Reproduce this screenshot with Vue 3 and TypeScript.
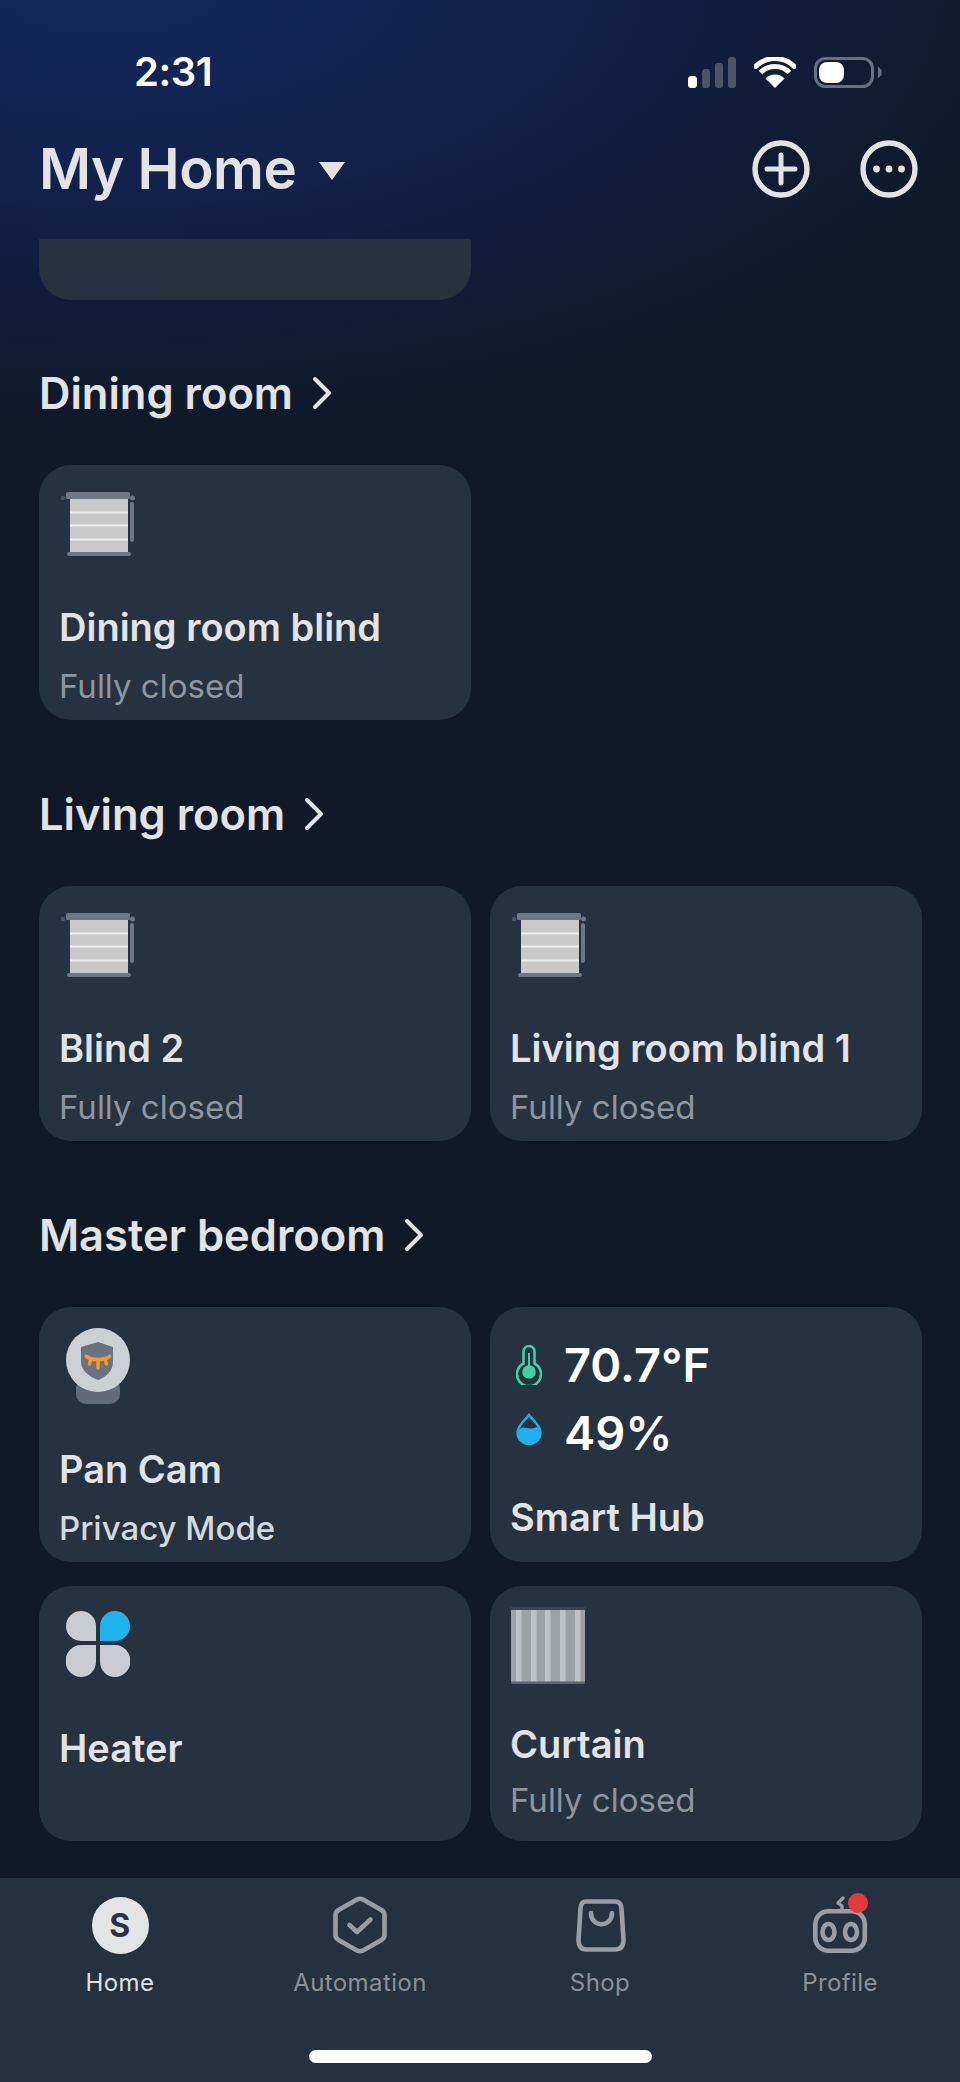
<script setup lang="ts">
interface Device { icon: string; name: string; sub?: string; lift?: boolean; bright?: boolean }
interface Room { title: string; devices: Device[] }

const rooms: Room[] = [
  { title: 'Dining room', devices: [{ icon: 'blind', name: 'Dining room blind', sub: 'Fully closed' }] },
  { title: 'Living room', devices: [
    { icon: 'blind', name: 'Blind 2', sub: 'Fully closed' },
    { icon: 'blind', name: 'Living room blind 1', sub: 'Fully closed' },
  ] },
  { title: 'Master bedroom', devices: [
    { icon: 'cam', name: 'Pan Cam', sub: 'Privacy Mode', bright: true },
    { icon: 'hub', name: 'Smart Hub' },
    { icon: 'heater', name: 'Heater' },
    { icon: 'curtain', name: 'Curtain', sub: 'Fully closed', lift: true },
  ] },
]
const curtainStripes = [5, 20, 34, 49, 64]
</script>

<template>
  <div class="screen">
    <div class="status">
      <span class="time">2:31</span>
      <div class="status-icons">
        <svg class="signal" width="48" height="31" viewBox="0 0 48 31">
          <rect x="0" y="19" width="9" height="12" rx="3.5" fill="#fff" />
          <rect x="14" y="12" width="8" height="19" rx="3" fill="#4c5568" />
          <rect x="27" y="6" width="8" height="25" rx="3" fill="#4c5568" />
          <rect x="40" y="0" width="8" height="31" rx="3" fill="#4c5568" />
        </svg>
        <svg class="wifi" width="42" height="31" viewBox="0 0 42 31">
          <path d="M21 31 L11.5 21.5 A13.5 13.5 0 0 1 30.5 21.5 Z" fill="#fff" />
          <path d="M6.5 15.5 A20.5 20.5 0 0 1 35.5 15.5" fill="none" stroke="#fff" stroke-width="5" />
          <path d="M1.8 9.4 A27.5 27.5 0 0 1 40.2 9.4" fill="none" stroke="#fff" stroke-width="5" stroke-linecap="round" />
        </svg>
        <svg class="battery" width="68" height="31" viewBox="0 0 68 31">
          <rect x="1.5" y="1.5" width="57" height="28" rx="10" fill="none" stroke="#687080" stroke-width="3" />
          <rect x="5" y="5" width="25" height="21" rx="8" fill="#fff" />
          <path d="M64 9.5 L67.5 13 V18 L64 21.5 Z" fill="#687080" />
        </svg>
      </div>
    </div>

    <header class="header">
      <h1 class="home-title">My Home</h1>
      <span class="caret"></span>
      <div class="actions">
        <svg width="58" height="58" viewBox="0 0 58 58" fill="none" stroke="#e2e3e5" stroke-width="5.4" stroke-linecap="round">
          <circle cx="29" cy="29" r="26" />
          <path d="M29 15 V43 M15 29 H43" stroke-width="5" />
        </svg>
        <svg width="58" height="58" viewBox="0 0 58 58" fill="none">
          <circle cx="29" cy="29" r="26" stroke="#e2e3e5" stroke-width="5.4" />
          <circle cx="16.5" cy="29" r="3.4" fill="#e2e3e5" />
          <circle cx="29" cy="29" r="3.4" fill="#e2e3e5" />
          <circle cx="41.5" cy="29" r="3.4" fill="#e2e3e5" />
        </svg>
      </div>
    </header>

    <main class="content">
      <div class="clipped"></div>
      <section v-for="room in rooms" :key="room.title" class="room">
        <div class="room-head">
          <h2 class="room-title">{{ room.title }}</h2>
          <svg width="22" height="34" viewBox="0 0 22 34" fill="none" stroke="#e2e3e5" stroke-width="4" stroke-linecap="round" stroke-linejoin="round">
            <path d="M4 3 L18 17 L4 31" />
          </svg>
        </div>
        <div class="grid">
          <article v-for="d in room.devices" :key="d.name" class="card" :class="{ lift: d.lift, 'hub-card': d.icon === 'hub' }">
            <div class="icon-slot" :class="'slot-' + d.icon">
              <svg v-if="d.icon === 'blind'" width="75" height="64" viewBox="0 0 75 64">
                <rect x="10" y="6" width="58" height="54" fill="#c9c9c9" />
                <rect x="10" y="19.5" width="58" height="2" fill="#eeeeee" />
                <rect x="10" y="32.5" width="58" height="2" fill="#eeeeee" />
                <rect x="10" y="46.5" width="58" height="2" fill="#eeeeee" />
                <rect x="6" y="0" width="64" height="7" rx="1.5" fill="#6f7785" />
                <rect x="7" y="60" width="64" height="4" rx="2" fill="#6f7785" />
                <rect x="70" y="10" width="4" height="40" rx="2" fill="#6f7785" />
                <circle cx="3" cy="6" r="2.3" fill="#4a5362" />
                <circle cx="72.5" cy="6" r="2.5" fill="#6f7785" />
              </svg>
              <svg v-else-if="d.icon === 'cam'" width="64" height="76" viewBox="0 0 64 76">
                <rect x="10" y="50" width="44" height="26" rx="10" fill="#636b78" />
                <circle cx="32" cy="32" r="32" fill="#ccd0d5" />
                <path d="M32 14 L47 19 V34 C47 43 40 49 32 52 C24 49 15 43 15 34 V19 Z" fill="#6a7280" />
                <path d="M20.5 28.5 C26 32.5 38 32.5 43.5 28.5" fill="none" stroke="#f59a2c" stroke-width="4" stroke-linecap="round" />
                <path d="M25 31 L23.5 36 M32 32 V40 M39 31 L40.5 36" fill="none" stroke="#f59a2c" stroke-width="3.4" stroke-linecap="round" />
              </svg>
              <div v-else-if="d.icon === 'hub'" class="readings">
                <div class="reading">
                  <svg width="26" height="40" viewBox="0 0 26 40" fill="none">
                    <path d="M7.5 18.5 V6.5 A5.5 5.5 0 0 1 18.5 6.5 V18.5 A12 12 0 1 1 7.5 18.5 Z" stroke="#43d0a0" stroke-width="2.6" />
                    <circle cx="13" cy="27" r="6.8" fill="#43d0a0" />
                    <rect x="12" y="8" width="2" height="16" fill="#43d0a0" />
                  </svg>
                  <span>70.7°F</span>
                </div>
                <div class="reading">
                  <svg class="drop" width="26" height="32" viewBox="0 0 26 32">
                    <path d="M13 2 C10 6.5 1.5 12 1.5 19.5 A11.5 11.5 0 0 0 24.5 19.5 C24.5 12 16 6.5 13 2 Z" fill="none" stroke="#1fb0ec" stroke-width="2.4" />
                    <path d="M2 18 C7 11 12 17 18 15 C20 14 22 14 24 15.5 C25 22 20 31 13 31 C6 31 1 25 2 18 Z" fill="#1fb0ec" />
                  </svg>
                  <span>49%</span>
                </div>
              </div>
              <svg v-else-if="d.icon === 'heater'" width="64" height="66" viewBox="0 0 64 66">
                <path d="M30 30 H15 A15 15 0 0 1 15 0 A15 15 0 0 1 30 15 Z" fill="#c9ccd1" />
                <path d="M34 30 H49 A15 15 0 0 0 49 0 A15 15 0 0 0 34 15 Z" fill="#1fb4ee" />
                <path d="M30 34 H15 A15.5 16 0 0 0 15 66 A15 15.5 0 0 0 30 51 Z" fill="#c9ccd1" />
                <path d="M34 34 H49 A15.5 16 0 0 1 49 66 A15 15.5 0 0 1 34 51 Z" fill="#c9ccd1" />
              </svg>
              <svg v-else-if="d.icon === 'curtain'" width="74" height="77" viewBox="0 0 74 77">
                <rect x="0" y="3" width="74" height="72" fill="#9ea2a7" />
                <rect v-for="x in curtainStripes" :key="x" :x="x" y="3" width="5.5" height="72" fill="#bdc2c6" />
                <rect x="0" y="0" width="74" height="3" fill="#3b4452" />
                <rect x="0" y="74.5" width="74" height="2.5" fill="#5e6570" />
              </svg>
            </div>
            <div class="name">{{ d.name }}</div>
            <div v-if="d.sub" class="sub" :class="{ bright: d.bright }">{{ d.sub }}</div>
          </article>
        </div>
      </section>
    </main>

    <nav class="nav">
      <div class="tab active">
        <div class="s-badge">S</div>
        <span>Home</span>
      </div>
      <div class="tab">
        <svg width="58" height="58" viewBox="0 0 58 58" fill="none" stroke="#9a9da3" stroke-width="4.6" stroke-linecap="round" stroke-linejoin="round">
          <path d="M26 3.6 Q29 2 32 3.6 L50.5 14 Q53.5 15.8 53.5 19 V39 Q53.5 42.2 50.5 44 L32 54.4 Q29 56 26 54.4 L7.5 44 Q4.5 42.2 4.5 39 V19 Q4.5 15.8 7.5 14 Z" />
          <path d="M18.5 29 L26 36 L39.5 23.5" />
        </svg>
        <span>Automation</span>
      </div>
      <div class="tab">
        <svg width="58" height="58" viewBox="0 0 58 58" fill="none" stroke="#9a9da3" stroke-width="4.6" stroke-linecap="round" stroke-linejoin="round">
          <path d="M15 5.5 H44 Q50 5.5 50.5 12.5 L52.5 44 Q52.5 53.5 44 53.5 H15 Q7.5 53.5 7.5 44 L9.5 12.5 Q10 5.5 15 5.5 Z" />
          <path d="M20 17 C20 32 41 32 41 17" />
        </svg>
        <span>Shop</span>
      </div>
      <div class="tab">
        <svg class="robot" width="64" height="58" viewBox="0 0 64 58" fill="none" stroke="#9a9da3" stroke-width="4.6" stroke-linecap="round" stroke-linejoin="round">
          <rect x="7.3" y="15.3" width="49.5" height="39.5" rx="13" />
          <ellipse cx="20.5" cy="36" rx="6" ry="8" />
          <ellipse cx="43" cy="36" rx="6" ry="8" />
          <path d="M35 2 L30 7 L34 10 V14" stroke-width="3.4" />
          <circle cx="50" cy="7" r="10" fill="#e53a3c" stroke="none" />
        </svg>
        <span>Profile</span>
      </div>
      <div class="home-bar"></div>
    </nav>
  </div>
</template>

<style>
html, body { margin: 0; background: #111926; }
</style>

<style scoped>
.screen {
  width: 960px;
  height: 2082px;
  display: flex;
  flex-direction: column;
  overflow: hidden;
  font-family: Inter, "Liberation Sans", sans-serif;
  color: #e2e3e5;
  background:
    radial-gradient(ellipse 1000px 470px at 110px -20px, #13285f 0%, #11234f 35%, #101c38 70%, rgba(17, 25, 38, 0) 100%),
    #111926;
}
.status {
  height: 44px;
  padding: 50px 0 0 134px;
  display: flex;
  align-items: center;
  justify-content: space-between;
}
.time { font-size: 40px; font-weight: 600; color: #fff; line-height: 44px; letter-spacing: -0.5px; }
.status-icons { display: flex; align-items: center; gap: 18px; padding-right: 78px; }
.header {
  height: 60px;
  margin-top: 45px;
  padding: 0 42px 0 39px;
  display: flex;
  align-items: center;
}
.home-title { margin: 0; font-size: 56.5px; font-weight: 600; line-height: 60px; letter-spacing: -0.5px; }
.caret {
  margin: 4px 0 0 23px;
  width: 0;
  height: 0;
  border-left: 13px solid transparent;
  border-right: 13px solid transparent;
  border-top: 18px solid #e2e3e5;
}
.actions { margin-left: auto; display: flex; gap: 50px; }
.content { margin-top: 40px; padding: 0 38px 0 39px; flex: 1; }
.clipped {
  width: 432px;
  height: 61px;
  background: #273241;
  border-radius: 0 0 32px 32px;
}
.room { margin-top: 68px; }
.room:first-of-type { margin-top: 67px; }
.room-head { height: 52px; display: flex; align-items: center; gap: 18px; margin-bottom: 46px; }
.room-title { margin: 0; font-size: 43.5px; font-weight: 600; line-height: 52px; }
.grid { display: grid; grid-template-columns: 432px 432px; column-gap: 19px; row-gap: 24px; }
.card {
  height: 255px;
  box-sizing: border-box;
  padding: 27px 20px 0 20px;
  background: #273241;
  border-radius: 32px;
  display: flex;
  flex-direction: column;
}
.icon-slot { height: 112px; margin-left: 1px; }
.slot-cam { margin-top: -6px; height: 118px; margin-left: 7px; }
.slot-heater { margin-top: -2px; height: 114px; margin-left: 7px; }
.slot-curtain { margin-top: -6px; height: 114px; margin-left: 1px; }
.name { font-size: 38px; font-weight: 600; line-height: 46px; color: #e2e3e5; white-space: nowrap; }
.sub { margin-top: 13px; font-size: 33px; font-weight: 400; line-height: 46px; color: #8f959d; }
.sub.bright { color: #d5d8dc; font-weight: 500; }
.lift .sub { margin-top: 10px; }
.hub-card { padding-top: 29px; }
.slot-hub { height: 158px; }
.readings { display: flex; flex-direction: column; gap: 10px; padding-left: 5px; }
.reading { display: flex; align-items: center; gap: 22px; height: 58px; font-size: 47px; font-weight: 600; color: #fff; line-height: 58px; }
.drop { margin-top: -8px; }
.nav {
  position: relative;
  height: 204px;
  background: #263140;
  display: grid;
  grid-template-columns: repeat(4, 240px);
  align-items: start;
}
.tab {
  display: flex;
  flex-direction: column;
  align-items: center;
  height: 130px;
  padding-top: 18px;
  color: #8c9199;
  font-size: 24px;
  line-height: 32px;
  letter-spacing: 0.4px;
}
.tab svg, .s-badge { height: 58px; flex: none; }
.robot { overflow: visible; }
.tab span { margin-top: 13px; }
.tab.active { color: #dfe1e4; }
.s-badge {
  width: 57px;
  height: 57px;
  margin-top: 1px;
  border-radius: 50%;
  background: #e3e4e6;
  color: #2a3444;
  font-size: 32px;
  font-weight: 700;
  display: flex;
  align-items: center;
  justify-content: center;
}
.home-bar {
  position: absolute;
  left: 309px;
  top: 172px;
  width: 343px;
  height: 13px;
  border-radius: 7px;
  background: #fff;
}
</style>
